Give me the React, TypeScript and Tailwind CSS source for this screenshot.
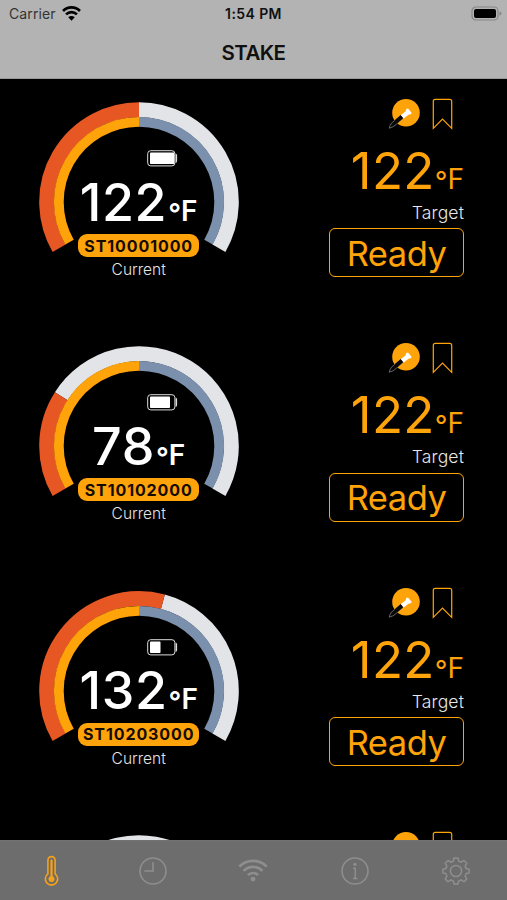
import type { ReactNode } from "react";

type Stake = { id: string; current: number; sweep: number; battery: number };

const stakes: Stake[] = [
  { id: "ST10001000", current: 122, sweep: 0, battery: 24.4 },
  { id: "ST10102000", current: 78, sweep: -57.4, battery: 20 },
  { id: "ST10203000", current: 132, sweep: 15, battery: 10.5 },
];

// Angles are in degrees clockwise from twelve o'clock.
function arc(radius: number, from: number, to: number) {
  const point = (deg: number) => {
    const a = (deg * Math.PI) / 180;
    return `${100 + radius * Math.sin(a)} ${100 + radius * -Math.cos(a)}`;
  };
  return `M${point(from)}A${radius} ${radius} 0 ${to - from > 180 ? 1 : 0} 1 ${point(to)}`;
}

function Gauge({ sweep }: { sweep: number }) {
  return (
    <svg className="absolute left-0 top-0 h-[160px] w-[200px]" viewBox="0 0 200 160" fill="none">
      <path d={arc(92.3, sweep, 120)} stroke="#e3e4e8" strokeWidth="15" />
      <path d={arc(92.3, -120, sweep)} stroke="#e65724" strokeWidth="15" />
      <path d={arc(80.2, 0, 120)} stroke="#7b90ac" strokeWidth="9.8" />
      <path d={arc(80.2, -120, 0)} stroke="#ffa30a" strokeWidth="9.8" />
    </svg>
  );
}

function Battery({ level }: { level: number }) {
  return (
    <svg className="block h-[17px] w-[31px]" viewBox="0 0 31 17" fill="none">
      <rect x=".7" y=".7" width="27.2" height="15.2" rx="3" stroke="#ddd" strokeWidth="1" />
      <rect x="3" y="2.6" width={level} height="11.4" rx=".8" fill="#fff" />
      <path d="M28.6 3.5q1.5.4 1.5 2v5.6q0 1.6-1.5 2z" fill="#ddd" />
    </svg>
  );
}

function Probe() {
  return (
    <svg className="h-8 w-8" viewBox="0 0 32 32">
      <circle cx="18" cy="14.7" r="13.8" fill="#ffa30a" />
      <path d="M13 17.2L3.8 24.8Q1.8 27 1.2 30.2q3.3-.8 5.600-2.600l8-7z" fill="#080808" stroke="#8c8c8c" strokeWidth=".7" />
      <path d="M6.500 22.400l6.300-5.300 2.500 3-6.500 5.600z" fill="#080808" />
      <path d="M12.800 17.100l4.700-3.600.9-2.700 1.800-.1 3.200 3.700-.1 1.700-2.800.6-4.800 3.700z" fill="#fff" />
    </svg>
  );
}

function Bookmark() {
  return (
    <svg className="h-[32px] w-[21px]" viewBox="0 0 21 32" fill="none" stroke="#ffa30a" strokeWidth="1.2">
      <path d="M1.3 30.3V3.3Q1.3 1.3 3.3 1.3h14.4q2 0 2 2v27L10.5 21z" />
    </svg>
  );
}

function Icons() {
  return (
    <div className="-mt-[4px] flex h-8 gap-[12px] pr-[11px]">
      <Probe />
      <Bookmark />
    </div>
  );
}

function StakeRow({ stake }: { stake: Stake }) {
  return (
    <section className="flex h-[244.3px] shrink-0 justify-between pl-[38.7px] pr-[43px] pt-[23px]">
      <div className="relative flex h-[180px] w-[200px] flex-col items-center">
        <Gauge sweep={stake.sweep} />
        <div className="ml-[47px] mt-[48px]">
          <Battery level={stake.battery} />
        </div>
        <div className="mt-[4.5px] flex h-[63.5px] items-baseline text-white">
          <span className="text-[52px] font-medium leading-[62px] tracking-[0.6px]">{stake.current}</span>
          <span className="text-[28px] font-semibold">
            <span className="relative top-[3px] ml-[1px]">°</span>F
          </span>
        </div>
        <div className="-mt-[1px] flex h-[23px] w-[121.5px] items-center justify-center rounded-[9px] bg-[#ffa30a] text-[16px] font-bold tracking-[0.9px] text-[#140c00]">
          {stake.id}
        </div>
        <div className="mt-[3px] text-[15.5px] font-light leading-[20px] text-[#e4e4e4]">Current</div>
      </div>
      <div className="flex w-[135px] flex-col items-end">
        <Icons />
        <div className="mt-[10px] flex h-[62px] items-baseline text-[#ffa30a]">
          <span className="text-[51px] leading-[62px] tracking-[0.3px]">122</span>
          <span className="text-[28px]">
            <span className="relative top-[3px]">°</span>F
          </span>
        </div>
        <div className="text-[17.5px] font-light leading-[22px] tracking-[0.15px] text-[#e8e8e8]">Target</div>
        <div className="mt-[4.4px] flex h-[49px] w-[135px] items-center justify-center rounded-[6px] border border-[#ffa30a] pt-[2px] text-[34.5px] tracking-[-0.5px] text-[#ffa30a]">
          Ready
        </div>
      </div>
    </section>
  );
}

// The next stake, of which only the top edge shows above the tab bar.
function PeekRow() {
  return (
    <section className="flex min-h-0 flex-1 justify-between overflow-hidden pl-[38.7px] pr-[43px] pt-[23px]">
      <div className="relative w-[200px]">
        <Gauge sweep={-57.4} />
      </div>
      <Icons />
    </section>
  );
}

function Wifi({ className, children }: { className: string; children?: ReactNode }) {
  return (
    <svg className={className} viewBox="0 0 28 22" fill="none" stroke="currentColor">
      {children}
    </svg>
  );
}

function TabBar() {
  return (
    <nav className="grid h-[60px] shrink-0 grid-cols-5 border-t border-[#727272] bg-[#6d6d6d] text-[#8e8e8e]">
      <div className="flex justify-center pt-[14px] text-[#f5a11a]">
        <svg className="h-8 w-4" viewBox="0 0 16 32" fill="none" stroke="currentColor">
          <path d="M4.9 18.9V5.2a3.6 3.6 0 0 1 7.2 0v13.7a6.2 6.2 0 1 1-7.2 0z" strokeWidth="1.6" />
          <path d="M8.5 5.5V22" strokeWidth="2.2" strokeLinecap="round" />
          <circle cx="8.5" cy="24" r="2.6" fill="currentColor" strokeWidth="1" />
        </svg>
      </div>
      <div className="flex justify-center pl-[1px] pt-[16px]">
        <svg className="h-7 w-7" viewBox="0 0 28 28" fill="none" stroke="currentColor" strokeWidth="1.6">
          <circle cx="14" cy="14" r="13" />
          <path d="M14 5.3V14H5.3" />
        </svg>
      </div>
      <div className="flex justify-center pt-[17px]">
        <Wifi className="h-[24px] w-[30px]">
          <path d="M1.2 7.8a18 18 0 0 1 25.6 0M5.2 11.8a12.4 12.4 0 0 1 17.6 0M9.2 15.8a6.8 6.8 0 0 1 9.6 0" strokeWidth="2.5" />
          <circle cx="14" cy="19.5" r="2.3" fill="currentColor" stroke="none" />
        </Wifi>
      </div>
      <div className="flex justify-center pt-[16px]">
        <svg className="h-7 w-7" viewBox="0 0 28 28" fill="none" stroke="currentColor" strokeWidth="1.6">
          <circle cx="14" cy="14" r="13" />
          <path d="M12 11.2h2.2v10.3M12 21.5h4.400" strokeWidth="1.5" />
          <circle cx="13.9" cy="7.3" r="1.6" fill="currentColor" stroke="none" />
        </svg>
      </div>
      <div className="flex justify-center pt-[16px]">
        <svg className="h-7 w-7" viewBox="0 0 28 28" fill="none" stroke="currentColor" strokeWidth="1.5" strokeLinejoin="round">
          <circle cx="14" cy="14" r="5.6" />
          <path d="M12 1h4l.7 3.2 2.5 1 2.8-1.7 2.8 2.8-1.7 2.8 1 2.5 3 .7v3.6l-3 .7-1 2.6 1.7 2.7-2.8 2.8-2.8-1.7-2.5 1L16 27h-4l-.7-3-2.5-1L6 24.7l-2.8-2.8L4.9 19.2l-1-2.6-3-.7v-3.6l3-.7 1-2.5L3.2 6.3 6 3.5l2.8 1.7 2.5-1z" />
        </svg>
      </div>
    </nav>
  );
}

export default function App() {
  return (
    <div className="flex h-[900px] w-[507px] flex-col overflow-hidden bg-black font-['Inter','Liberation_Sans',sans-serif]">
      <header className="h-[79px] shrink-0 border-b border-[#999] bg-[#b3b3b3] text-[#101010]">
        <div className="grid h-[27px] grid-cols-3 items-center px-[9px]">
          <div className="flex items-center gap-[6px] text-[14px] tracking-[0.1px] text-[#333]">
            <span>Carrier</span>
            <Wifi className="h-[15px] w-[19px] text-black">
              <path d="M1.5 7.3a17.5 17.5 0 0 1 25 0M6 12.3a11.3 11.3 0 0 1 16 0" strokeWidth="3.9" />
              <path d="M14 21.5l-4.8-4.9a6.8 6.8 0 0 1 9.6 0z" fill="currentColor" stroke="none" />
            </Wifi>
          </div>
          <div className="text-center text-[14px] font-semibold tracking-[0.4px]">1:54 PM</div>
          <div className="-mr-[4px] flex justify-end">
            <svg className="h-[15px] w-[31px]" viewBox="0 0 31 15" fill="none">
              <rect x="1" y="1" width="26" height="13" rx="3.8" stroke="#858585" strokeWidth="1.2" />
              <rect x="3" y="3" width="22" height="9" rx="2" fill="#000" />
              <path d="M28.5 5.2q2 .8 2 2.3t-2 2.3z" fill="#858585" />
            </svg>
          </div>
        </div>
        <h1 className="text-center text-[20.5px] font-semibold leading-[51px] tracking-[-0.6px]">STAKE</h1>
      </header>
      <main className="flex min-h-0 flex-1 flex-col overflow-hidden">
        {stakes.map((stake) => (
          <StakeRow key={stake.id} stake={stake} />
        ))}
        <PeekRow />
      </main>
      <TabBar />
    </div>
  );
}
